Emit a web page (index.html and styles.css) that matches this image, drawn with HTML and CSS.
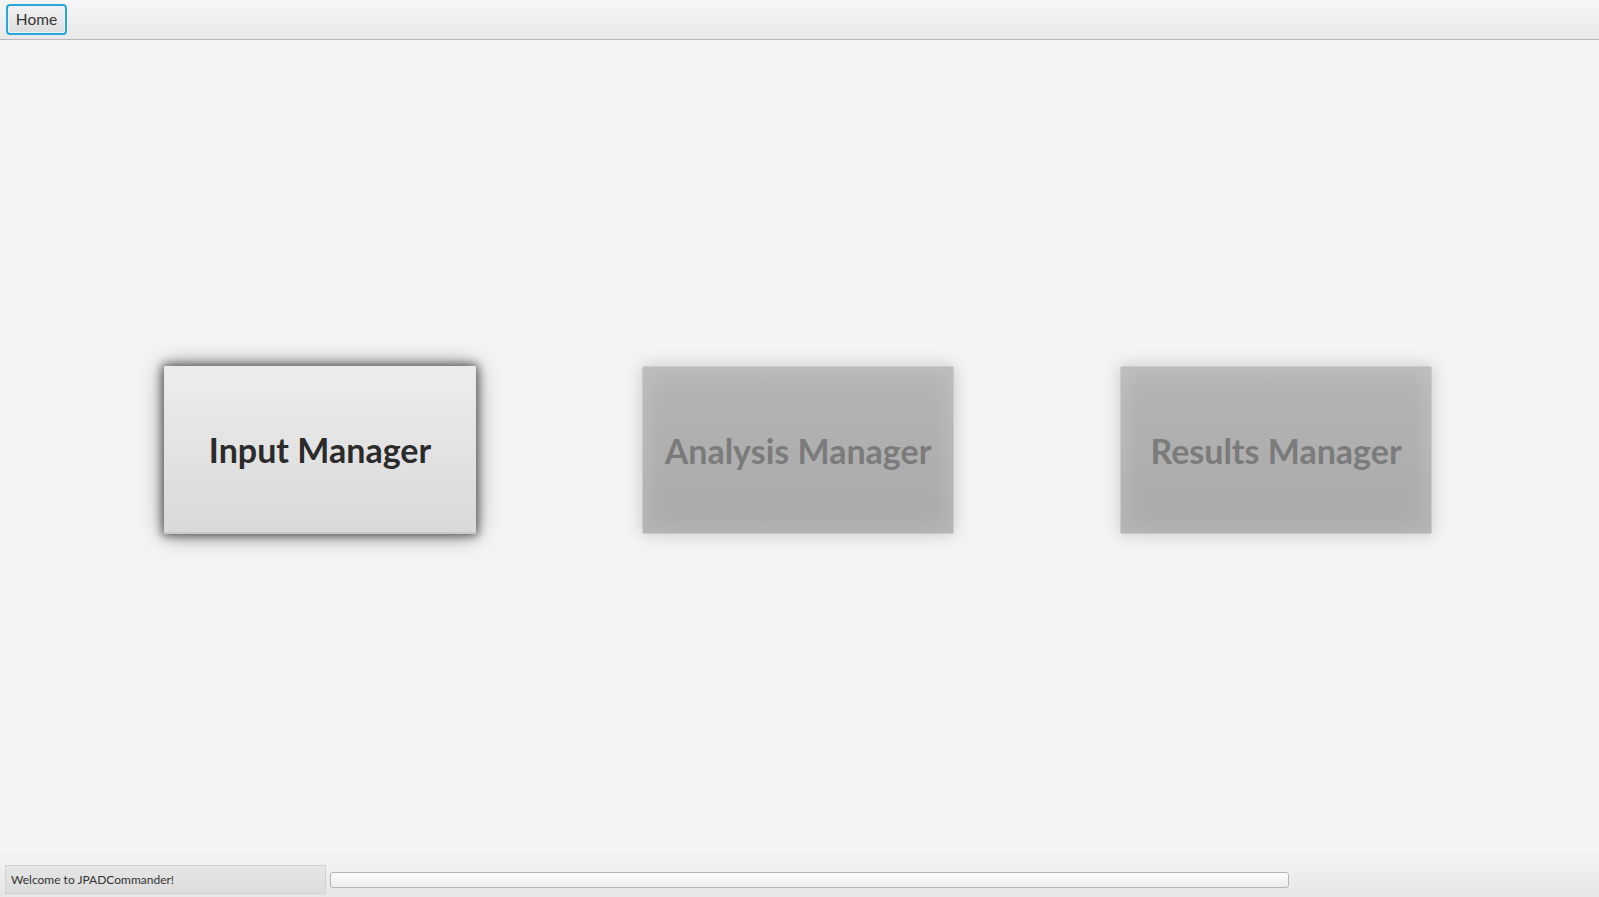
FILE: index.html
```html
<!DOCTYPE html>
<html>
<head>
<meta charset="utf-8">
<link rel="stylesheet" href="styles.css">
</head>
<body>
<div class="app">
  <header class="topbar">
    <button class="home-btn">Home</button>
  </header>
  <main class="main">
    <div class="big-btn active">Input Manager</div>
    <div class="big-btn disabled">Analysis Manager</div>
    <div class="big-btn disabled">Results Manager</div>
  </main>
  <footer class="statusbar">
    <div class="status-label">Welcome to JPADCommander!</div>
    <div class="progress"></div>
  </footer>
</div>
</body>
</html>
```
FILE: styles.css
```css
html, body {
  margin: 0;
  padding: 0;
  height: 100%;
}
body {
  background: #f4f4f4;
  font-family: "Segoe UI", "Lato", "Open Sans", "Noto Sans", sans-serif;
  color: #333;
  overflow: hidden;
}
.app {
  display: flex;
  flex-direction: column;
  height: 897px;
}
.topbar {
  border-bottom: 1px solid #b8b8b8;
  background: linear-gradient(#f6f6f6, #e9e9e9);
  display: flex;
  align-items: flex-start;
  padding: 4px 0 0 6px;
  height: 35px;
}
.home-btn {
  width: 61px;
  height: 31px;
  box-sizing: border-box;
  border: 2px solid #2aa6d8;
  border-radius: 4px;
  background: linear-gradient(#f2f2f2, #dedede);
  box-shadow: inset 0 0 0 1px #e8f4f9;
  font-family: inherit;
  font-size: 15.5px;
  color: #333;
  padding: 0;
  line-height: 1;
}
.main {
  flex: 1;
  display: flex;
  justify-content: center;
  align-items: center;
  gap: 166px;
  padding: 6px 3px 0 0;
}
.big-btn {
  width: 312px;
  height: 168px;
  box-sizing: border-box;
  display: flex;
  justify-content: center;
  align-items: center;
  font-size: 34px;
  font-weight: 700;
  border-radius: 2px;
}
.big-btn.active {
  background: linear-gradient(#ededed, #d9d9d9);
  border-bottom: 2px solid #c9c9c9;
  color: #2b2b2b;
  box-shadow: 0 0 10px 2px rgba(0,0,0,0.55), 0 0 24px rgba(0,0,0,0.4);
}
.big-btn.disabled {
  background: linear-gradient(#b4b4b4, #aaaaaa);
  border: 1px solid #cacaca;
  color: #7b7b7b;
  box-shadow: inset 0 0 24px 4px rgba(255,255,255,0.18), 0 0 18px rgba(0,0,0,0.18);
}
.statusbar {
  height: 43px;
  box-sizing: border-box;
  background: linear-gradient(#f4f4f4, #e6e6e6);
  border-top: 1px solid #ededed;
  display: flex;
  align-items: center;
  padding: 10px 0 3px 5px;
  gap: 4px;
}
.status-label {
  width: 321px;
  height: 29px;
  box-sizing: border-box;
  background: linear-gradient(#e6e6e6, #dcdcdc);
  border: 1px solid #d2d2d2;
  font-size: 12px;
  color: #333;
  display: flex;
  align-items: center;
  padding-left: 5px;
}
.progress {
  width: 959px;
  height: 16px;
  box-sizing: border-box;
  border: 1px solid #b4b4b4;
  border-radius: 3px;
  background: linear-gradient(#fdfdfd, #ececec);
}
```
